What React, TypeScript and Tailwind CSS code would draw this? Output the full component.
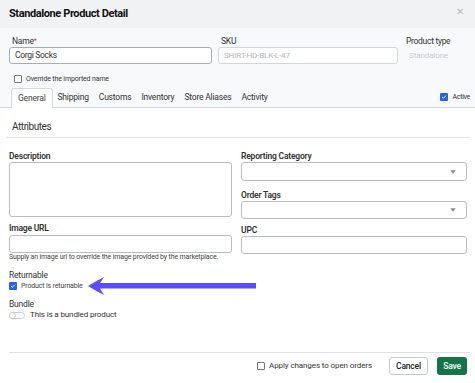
import React from "react";

const Check = ({ checked }: { checked?: boolean }) =>
  checked ? (
    <span className="inline-flex w-[8px] h-[8px] rounded-[1px] bg-[#2563eb] items-center justify-center shrink-0">
      <svg width="6" height="6" viewBox="0 0 8 8">
        <path d="M1.5 4.2 L3.2 5.8 L6.5 2.2" stroke="white" strokeWidth="1.2" fill="none" />
      </svg>
    </span>
  ) : (
    <span className="inline-block w-[8px] h-[8px] rounded-[1px] border border-[#777] bg-white shrink-0" />
  );

const Caret = () => (
  <svg width="6" height="4" viewBox="0 0 6 4" className="absolute right-[10px] top-1/2 -translate-y-1/2">
    <path d="M0.3 0.3 L5.7 0.3 L3 3.7 Z" fill="#888" />
  </svg>
);

export default function App() {
  return (
    <div
      className="relative w-[475px] h-[383px] bg-white overflow-hidden text-[#333]"
      style={{ fontFamily: "Roboto, 'Liberation Sans', Arial, sans-serif" }}
    >
      {/* Header */}
      <div className="h-[28px] bg-[#f1f2f4] flex items-center justify-between pl-[9px] pr-[11px]">
        <div className="text-[11px] font-bold text-[#111] tracking-[-0.4px]">Standalone Product Detail</div>
        <div className="text-[#b5b8bd] text-[10px] leading-none -mt-[5px]">✕</div>
      </div>

      {/* Top area */}
      <div className="bg-[#f8f9fb] pt-[8px] border-b border-[#d5d8dc]">
        <div className="flex pl-[9px]">
          <div className="w-[203px]">
            <div className="text-[8.5px] tracking-[-0.2px] text-[#333] pl-[3px] h-[10px] leading-[10px]">
              Name<span className="text-[#e11d48] text-[7px] align-top">*</span>
            </div>
            <div className="h-[17px] mt-[1px] border border-[#a9adb3] rounded-[3px] bg-white text-[8.5px] tracking-[-0.3px] flex items-center pl-[5px] text-[#333]">
              Corgi Socks
            </div>
          </div>
          <div className="w-[180px] ml-[6px]">
            <div className="text-[8.5px] tracking-[-0.2px] text-[#333] pl-[3px] h-[10px] leading-[10px]">SKU</div>
            <div className="h-[17px] mt-[1px] border border-[#d3d6da] rounded-[3px] bg-white text-[8px] tracking-[-0.15px] flex items-center pl-[5px] text-[#b3b6ba]">
              SHIRT-HD-BLK-L-47
            </div>
          </div>
          <div className="ml-[8px]">
            <div className="text-[8.5px] tracking-[-0.3px] text-[#333] h-[10px] leading-[10px]">Product type</div>
            <div className="h-[17px] mt-[1px] text-[8px] tracking-[-0.1px] flex items-center pl-[3px] text-[#c8cbcf]">Standalone</div>
          </div>
        </div>
        <div className="flex items-center gap-[4px] pl-[14px] mt-[11px] h-[8px]">
          <Check />
          <span className="text-[7px] tracking-[-0.15px] text-[#333]">Override the imported name</span>
        </div>
        {/* Tabs */}
        <div className="flex items-end pl-[11px] mt-[4px] h-[20px] text-[8.5px] tracking-[-0.2px] text-[#333]">
          <div className="h-[20px] px-[6px] flex items-center bg-white border border-b-0 border-[#d5d8dc] rounded-t-[3px] -mb-px pb-px text-[#444]">
            General
          </div>
          <div className="h-[20px] px-[5px] flex items-center">Shipping</div>
          <div className="h-[20px] px-[5px] flex items-center">Customs</div>
          <div className="h-[20px] px-[5px] flex items-center">Inventory</div>
          <div className="h-[20px] px-[5px] flex items-center">Store Aliases</div>
          <div className="h-[20px] px-[5px] flex items-center">Activity</div>
          <div className="flex-1" />
          <div className="h-[20px] flex items-center gap-[5px] pr-[5px]">
            <Check checked />
            <span className="text-[7px] tracking-[-0.3px]">Active</span>
          </div>
        </div>
      </div>

      {/* Attributes */}
      <div className="pl-[6px] pr-[5px]">
        <div className="h-[30px] border-b border-[#e3e5e8] flex items-end pb-[5px] pl-[6px] text-[10px] tracking-[-0.45px] leading-[10px] text-[#333]">
          Attributes
        </div>
      </div>

      <div className="grid grid-cols-[223px_226px] gap-x-[9px] pl-[9px] mt-[13px]">
        <div className="flex flex-col">
          <div className="text-[8.5px] tracking-[-0.2px] font-semibold text-[#333] h-[10px] leading-[10px]">Description</div>
          <div className="h-[55px] border border-[#b9bdc2] rounded-[3px] mt-[1px]" />
          <div className="text-[8.5px] tracking-[-0.2px] font-semibold text-[#333] h-[10px] leading-[10px] mt-[6px]">Image URL</div>
          <div className="h-[18px] border border-[#b9bdc2] rounded-[3px] mt-[2px]" />
          <div className="text-[7px] tracking-[-0.15px] text-[#444] leading-[8px] h-[8px] whitespace-nowrap">
            Supply an image url to override the image provided by the marketplace.
          </div>
        </div>
        <div className="flex flex-col">
          <div className="text-[8.5px] tracking-[-0.2px] font-semibold text-[#333] h-[10px] leading-[10px]">Reporting Category</div>
          <div className="relative h-[19px] border border-[#b9bdc2] rounded-[3px] mt-[1px]">
            <Caret />
          </div>
          <div className="text-[8.5px] tracking-[-0.2px] font-semibold text-[#333] h-[10px] leading-[10px] mt-[9px]">Order Tags</div>
          <div className="relative h-[18px] border border-[#b9bdc2] rounded-[3px] mt-[1px]">
            <Caret />
          </div>
          <div className="text-[8.5px] tracking-[-0.2px] font-semibold text-[#333] h-[10px] leading-[10px] mt-[6px]">UPC</div>
          <div className="h-[18px] border border-[#b9bdc2] rounded-[3px] mt-[1px]" />
        </div>
      </div>

      <div className="pl-[9px] mt-[9px]">
        <div className="text-[8.5px] tracking-[-0.2px] text-[#333] h-[10px] leading-[10px]">Returnable</div>
        <div className="flex items-center gap-[4px] h-[8px] mt-[2px]">
          <Check checked />
          <span className="text-[7px] tracking-[-0.15px] text-[#444]">Product is returnable</span>
        </div>
        <div className="text-[8.5px] tracking-[-0.2px] text-[#333] h-[10px] leading-[10px] mt-[9px]">Bundle</div>
        <div className="flex items-center gap-[5px] h-[10px] mt-[1px]">
          <span className="inline-block w-[16px] h-[7px] rounded-full border border-[#c9ccd0] bg-white relative">
            <span className="absolute left-[-1px] top-[-1px] w-[7px] h-[7px] rounded-full border border-[#c9ccd0] bg-white" />
          </span>
          <span className="text-[8px] tracking-[-0.12px] text-[#333]">This is a bundled product</span>
        </div>
      </div>

      {/* Footer */}
      <div className="absolute left-[9px] right-[5px] top-[352px] border-t border-[#dfe1e4]" />
      <div className="absolute left-0 right-0 top-[357px] flex items-center justify-end pr-[8px] h-[18px]">
        <div className="flex items-center gap-[4px] mr-[17px]">
          <Check />
          <span className="text-[8px] tracking-[-0.1px] text-[#333]">Apply changes to open orders</span>
        </div>
        <div className="h-[18px] w-[39px] justify-center flex items-center border border-[#c5c8cc] rounded-[3px] bg-white text-[8.5px] tracking-[-0.2px] font-medium text-[#222] mr-[9px]">
          Cancel
        </div>
        <div className="h-[18px] w-[30px] justify-center flex items-center rounded-[3px] bg-[#17744a] text-[8.5px] tracking-[-0.2px] font-medium text-white">
          Save
        </div>
      </div>

      {/* Annotation arrow */}
      <svg className="absolute left-[86px] top-[275px]" width="172" height="22" viewBox="0 0 172 22">
        <path d="M2 11 Q10 6 18 2 L14 8 L170 8 L170 13.5 L14 13.5 L18 20 Q10 16 2 11 Z" fill="#5a4ff5" />
      </svg>
    </div>
  );
}
